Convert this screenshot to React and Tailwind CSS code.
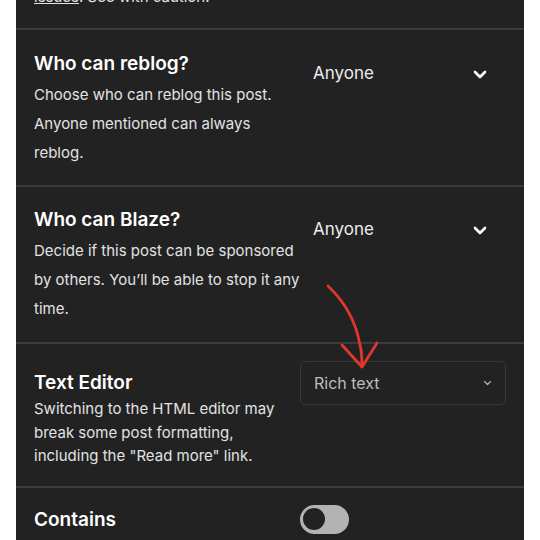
import { useState } from 'react';

// bold chevron used by the borderless selects
function BoldChevron() {
  return (
    <svg width="14" height="9" viewBox="0 0 14 9" fill="none">
      <path d="M2 2l5 5 5-5" stroke="#fff" strokeWidth="2.6" strokeLinecap="round" strokeLinejoin="round" />
    </svg>
  );
}

function SmallChevron() {
  return (
    <svg width="9" height="6" viewBox="0 0 9 6" fill="none">
      <path d="M1.5 1.5l3 3 3-3" stroke="#aaa" strokeWidth="1.4" strokeLinecap="round" strokeLinejoin="round" />
    </svg>
  );
}

function Divider() {
  return <div className="h-[2px] shrink-0 bg-[#3b3b3b]" />;
}

function SettingRow({ title, lines, value, pad }) {
  return (
    <div className={`flex px-[18px] ${pad}`}>
      <div className="w-[266px] shrink-0">
        <div className="text-[19px] leading-[24px] font-semibold text-white">{title}</div>
        <div className="mt-[4px] text-[15px] leading-[29px] text-[#e2e2e2]">
          {lines.map((l) => (
            <div key={l}>{l}</div>
          ))}
        </div>
      </div>
      <div className="flex-1 ml-[-2px]">
        <button className="flex h-[44px] w-full items-center justify-between pl-[15px] pr-[19px]">
          <span className="text-[17px] text-[#ececec]">{value}</span>
          <BoldChevron />
        </button>
      </div>
    </div>
  );
}

export default function App() {
  const [contains, setContains] = useState(false);

  return (
    <div className="h-[540px] overflow-hidden bg-white" style={{ fontFamily: 'Inter, "Noto Sans", sans-serif' }}>
      <div className="relative mx-[16px] flex h-full flex-col bg-[#222222]">
        {/* clipped tail of previous setting */}
        <div className="-mt-[18px] px-[18px] pb-[17px]">
          <div className="text-[15px] leading-[29px] text-[#e2e2e2]">
            <span className="underline">issues</span>. See with caution.
          </div>
        </div>
        <Divider />

        <SettingRow
          title="Who can reblog?"
          lines={['Choose who can reblog this post.', 'Anyone mentioned can always', 'reblog.']}
          value="Anyone"
          pad="pt-[22px] pb-[18px]"
        />
        <Divider />

        <SettingRow
          title="Who can Blaze?"
          lines={['Decide if this post can be sponsored', 'by others. You’ll be able to stop it any', 'time.']}
          value="Anyone"
          pad="pt-[21px] pb-[19px]"
        />
        <Divider />

        {/* Text editor */}
        <div className="flex px-[18px] pt-[17px] pb-[18px]">
          <div className="w-[266px] shrink-0 pt-[10px]">
            <div className="text-[19px] leading-[24px] font-semibold text-white">Text Editor</div>
            <div className="mt-[2px] text-[15px] leading-[23.5px] text-[#e2e2e2]">
              <div>Switching to the HTML editor may</div>
              <div>break some post formatting,</div>
              <div>including the "Read more" link.</div>
            </div>
          </div>
          <div className="flex-1">
            <button className="flex h-[44px] w-full items-center justify-between rounded-[5px] border border-[#393939] pl-[13px] pr-[13px]">
              <span className="text-[16px] text-[#bdbdbd]">Rich text</span>
              <SmallChevron />
            </button>
          </div>
        </div>
        <Divider />

        {/* Contains */}
        <div className="flex px-[18px] pt-[17px]">
          <div className="w-[266px] shrink-0 pt-[3px] text-[19px] leading-[24px] font-semibold text-white">Contains</div>
          <button
            onClick={() => setContains(!contains)}
            className="flex h-[29px] w-[49px] items-center rounded-full bg-[#b3b3b3] px-[3px]"
          >
            <span className="h-[22px] w-[22px] rounded-full bg-[#222222]" />
          </button>
        </div>

        {/* hand-drawn red arrow */}
        <svg className="pointer-events-none absolute left-[-16px] top-0" width="540" height="540" viewBox="0 0 540 540" fill="none">
          <path
            d="M328 286 C345 302 356 322 360 345 C362 352 362 358 362 366"
            stroke="#e0362c"
            strokeWidth="2.8"
            strokeLinecap="round"
          />
          <path d="M342 345 L362 367 L377 343" stroke="#e0362c" strokeWidth="2.8" strokeLinecap="round" strokeLinejoin="round" />
        </svg>
      </div>
    </div>
  );
}
